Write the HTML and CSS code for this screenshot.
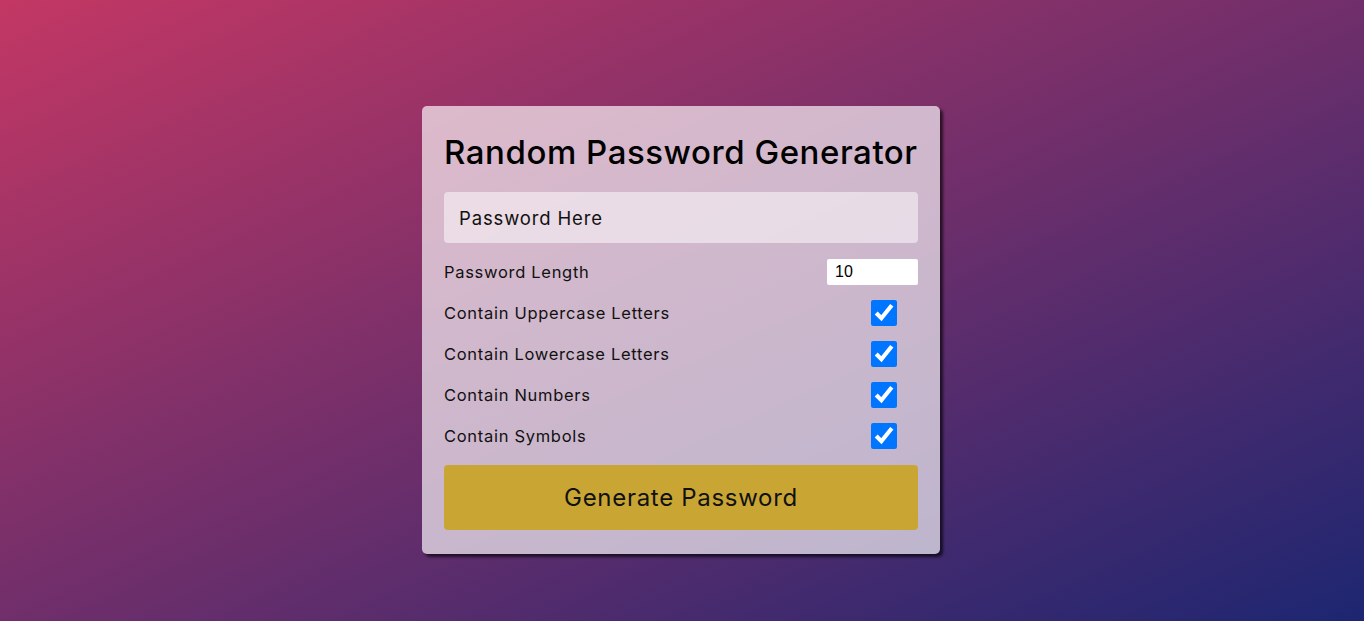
FILE: index.html
```html
<!DOCTYPE html>
<html lang="en">
<head>
<meta charset="UTF-8">
<title>Random Password Generator</title>
<link rel="stylesheet" href="styles.css">
</head>
<body>
  <div class="card">
    <h1 class="title">Random Password Generator</h1>
    <div class="output">Password Here</div>
    <div class="options">
      <div class="row">
        <label class="label">Password Length</label>
        <input class="num" type="number" value="10">
      </div>
      <div class="row">
        <label class="label">Contain Uppercase Letters</label>
        <input class="check" type="checkbox" checked>
      </div>
      <div class="row">
        <label class="label">Contain Lowercase Letters</label>
        <input class="check" type="checkbox" checked>
      </div>
      <div class="row">
        <label class="label">Contain Numbers</label>
        <input class="check" type="checkbox" checked>
      </div>
      <div class="row">
        <label class="label">Contain Symbols</label>
        <input class="check" type="checkbox" checked>
      </div>
    </div>
    <button class="btn">Generate Password</button>
  </div>
</body>
</html>
```

FILE: styles.css
```css
* { box-sizing: border-box; }
html, body { height: 100%; }
body {
  margin: 0;
  font-family: "Inter", "Open Sans", sans-serif;
  background: linear-gradient(to right bottom, #c33764, #1d2671);
  display: flex;
  flex-direction: column;
  align-items: center;
  padding-top: 106px;
  padding-right: 2px;
}
.card {
  width: 518px;
  background: rgba(255, 255, 255, 0.66);
  border-radius: 5px;
  box-shadow: 3px 3px 3px rgba(0, 0, 0, 0.65);
  padding: 26px 22px 24px;
  display: flex;
  flex-direction: column;
}
.title {
  margin: 0;
  font-size: 33px;
  font-weight: 500;
  color: #000;
  line-height: 40px;
  letter-spacing: 0.55px;
  white-space: nowrap;
}
.output {
  margin-top: 20px;
  height: 51px;
  background: rgba(255, 255, 255, 0.5);
  border-radius: 4px;
  padding: 0 15px;
  display: flex;
  align-items: center;
  font-size: 18.5px;
  letter-spacing: 0.85px;
  color: #111;
}
.options {
  margin-top: 8px;
  display: flex;
  flex-direction: column;
}
.row {
  display: flex;
  justify-content: space-between;
  align-items: center;
  height: 41px;
}
.label {
  font-size: 16.5px;
  letter-spacing: 0.7px;
  color: #111;
}
.num {
  width: 91px;
  height: 26px;
  border: none;
  border-radius: 2px;
  background: #fff;
  font-family: "Liberation Sans", Arial, sans-serif;
  font-size: 16px;
  padding: 0 8px;
  margin: 0;
}
.check {
  width: 26px;
  height: 26px;
  margin: 0 21px 0 0;
  accent-color: #0075ff;
}
.btn {
  margin-top: 9px;
  height: 65px;
  border: none;
  border-radius: 4px;
  background: #c9a633;
  font-family: inherit;
  font-size: 24px;
  letter-spacing: 0.7px;
  color: #111;
  cursor: pointer;
}
```
